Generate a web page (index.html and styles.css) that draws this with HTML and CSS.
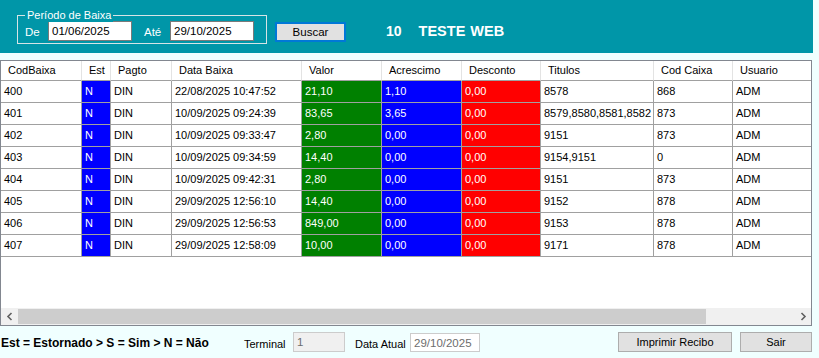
FILE: index.html
```html
<!DOCTYPE html>
<html lang="pt">
<head>
<meta charset="utf-8">
<title>Baixas</title>
<link rel="stylesheet" href="styles.css">
</head>
<body>
<div class="topbar">
  <div class="group">
    <span class="legend">Período de Baixa</span>
    <span class="lbl lbl-de">De</span>
    <div class="tb">01/06/2025</div>
    <span class="lbl lbl-ate">Até</span>
    <div class="tb">29/10/2025</div>
  </div>
  <button class="btn btn-buscar">Buscar</button>
  <span class="title-num">10</span>
  <span class="title-name">TESTE WEB</span>
</div>

<div class="grid-wrap">
  <div class="grid">
    <div class="hd">CodBaixa</div><div class="hd">Est</div><div class="hd">Pagto</div><div class="hd">Data Baixa</div><div class="hd">Valor</div><div class="hd">Acrescimo</div><div class="hd">Desconto</div><div class="hd">Titulos</div><div class="hd">Cod Caixa</div><div class="hd last">Usuario</div>

    <div class="c">400</div><div class="c blue">N</div><div class="c">DIN</div><div class="c">22/08/2025 10:47:52</div><div class="c green">21,10</div><div class="c blue">1,10</div><div class="c red">0,00</div><div class="c">8578</div><div class="c">868</div><div class="c last">ADM</div>
    <div class="c">401</div><div class="c blue">N</div><div class="c">DIN</div><div class="c">10/09/2025 09:24:39</div><div class="c green">83,65</div><div class="c blue">3,65</div><div class="c red">0,00</div><div class="c">8579,8580,8581,8582</div><div class="c">873</div><div class="c last">ADM</div>
    <div class="c">402</div><div class="c blue">N</div><div class="c">DIN</div><div class="c">10/09/2025 09:33:47</div><div class="c green">2,80</div><div class="c blue">0,00</div><div class="c red">0,00</div><div class="c">9151</div><div class="c">873</div><div class="c last">ADM</div>
    <div class="c">403</div><div class="c blue">N</div><div class="c">DIN</div><div class="c">10/09/2025 09:34:59</div><div class="c green">14,40</div><div class="c blue">0,00</div><div class="c red">0,00</div><div class="c">9154,9151</div><div class="c">0</div><div class="c last">ADM</div>
    <div class="c">404</div><div class="c blue">N</div><div class="c">DIN</div><div class="c">10/09/2025 09:42:31</div><div class="c green">2,80</div><div class="c blue">0,00</div><div class="c red">0,00</div><div class="c">9151</div><div class="c">873</div><div class="c last">ADM</div>
    <div class="c">405</div><div class="c blue">N</div><div class="c">DIN</div><div class="c">29/09/2025 12:56:10</div><div class="c green">14,40</div><div class="c blue">0,00</div><div class="c red">0,00</div><div class="c">9152</div><div class="c">878</div><div class="c last">ADM</div>
    <div class="c">406</div><div class="c blue">N</div><div class="c">DIN</div><div class="c">29/09/2025 12:56:53</div><div class="c green">849,00</div><div class="c blue">0,00</div><div class="c red">0,00</div><div class="c">9153</div><div class="c">878</div><div class="c last">ADM</div>
    <div class="c">407</div><div class="c blue">N</div><div class="c">DIN</div><div class="c">29/09/2025 12:58:09</div><div class="c green">10,00</div><div class="c blue">0,00</div><div class="c red">0,00</div><div class="c">9171</div><div class="c">878</div><div class="c last">ADM</div>
  </div>
  <div class="grid-empty"></div>
  <div class="hscroll">
    <div class="arrow"><svg width="8" height="9" viewBox="0 0 8 9"><path d="M5.5 1 L2 4.5 L5.5 8" fill="none" stroke="#606060" stroke-width="1.6"/></svg></div>
    <div class="thumb"></div>
    <div class="track"></div>
    <div class="arrow"><svg width="8" height="9" viewBox="0 0 8 9"><path d="M2.5 1 L6 4.5 L2.5 8" fill="none" stroke="#606060" stroke-width="1.6"/></svg></div>
  </div>
</div>

<div class="footer">
  <span class="note">Est = Estornado &gt; S = Sim &gt; N = Não</span>
  <span class="flbl flbl-term">Terminal</span>
  <div class="ftb ftb-term">1</div>
  <span class="flbl flbl-data">Data Atual</span>
  <div class="ftb ftb-data">29/10/2025</div>
  <span class="spacer"></span>
  <button class="btn btn-imp">Imprimir Recibo</button>
  <button class="btn btn-sair">Sair</button>
</div>
</body>
</html>
```

FILE: styles.css
```css
* { box-sizing: border-box; }
html, body {
  margin: 0;
  padding: 0;
  background: #f0ffff;
  font-family: "Liberation Sans", Arial, sans-serif;
  font-size: 11px;
  color: #000;
}

/* Top bar */
.topbar {
  width: 813px;
  height: 53px;
  background: #0096a8;
  display: flex;
  align-items: flex-start;
}
.group {
  position: relative;
  margin-left: 17px;
  margin-top: 15px;
  width: 250px;
  height: 29px;
  border: 1px solid #d6e4e6;
  display: flex;
  align-items: flex-start;
  padding-top: 5px;
  padding-left: 7px;
}
.legend {
  position: absolute;
  top: -8px;
  left: 7px;
  padding: 0 2px;
  background: #0096a8;
  color: #fff;
  font-size: 11px;
  line-height: 14px;
}
.lbl {
  color: #fff;
  font-size: 11.5px;
  line-height: 20px;
  padding-top: 1px;
}
.lbl-de { width: 23px; }
.lbl-ate { margin-left: 12px; width: 26px; }
.tb {
  width: 84px;
  height: 20px;
  background: #fff;
  border: 1px solid #7a7a7a;
  font-size: 11.5px;
  line-height: 18px;
  padding-left: 3px;
  color: #000;
}
.btn {
  font-family: "Liberation Sans", Arial, sans-serif;
  font-size: 11px;
  background: #e1e1e1;
  border: 1px solid #adadad;
  color: #000;
  padding: 0;
  height: 20px;
  line-height: 18px;
}
.btn-buscar {
  margin-left: 8px;
  margin-top: 22px;
  width: 71px;
  border: 2px solid #0078d7;
  line-height: 16px;
  font-size: 11.5px;
}
.title-num, .title-name {
  color: #fff;
  font-weight: bold;
  font-size: 14px;
  line-height: 18px;
  margin-top: 22px;
}
.title-num { margin-left: 40px; }
.title-name { margin-left: 17px; font-size: 14.5px; word-spacing: 1px; }

/* Grid */
.grid-wrap {
  margin-top: 7px;
  width: 812px;
  height: 266px;
  border: 1px solid #828790;
  background: #fff;
  display: flex;
  flex-direction: column;
}
.grid {
  display: grid;
  grid-template-columns: 81px 29px 61px 130px 80px 80px 79px 113px 79px 78px;
  grid-auto-rows: 22px;
  grid-template-rows: 20px;
}
.hd {
  border-right: 1px solid #e3e3e3;
  border-bottom: 1px solid #a0a0a0;
  padding-left: 7px;
  line-height: 19px;
  white-space: nowrap;
  overflow: hidden;
  color: #000;
}
.c {
  border-right: 1px solid #a0a0a0;
  border-bottom: 1px solid #a0a0a0;
  padding-left: 3px;
  line-height: 21px;
  white-space: nowrap;
  overflow: hidden;
}
.last { border-right: none; }
.blue { background: #0000ff; color: #fff; }
.green { background: #008000; color: #fff; }
.red { background: #ff0000; color: #fff; }
.grid-empty { flex: 1; }
.hscroll {
  height: 17px;
  display: flex;
  background: #f0f0f0;
}
.arrow {
  width: 17px;
  height: 17px;
  display: flex;
  align-items: center;
  justify-content: center;
}
.thumb {
  width: 688px;
  height: 15px;
  margin-top: 1px;
  background: #cdcdcd;
}
.track { flex: 1; }

/* Footer */
.footer {
  width: 812px;
  height: 32px;
  display: flex;
  align-items: flex-start;
  padding-top: 6px;
}
.note {
  font-weight: bold;
  font-size: 12px;
  line-height: 20px;
  padding-top: 1px;
  padding-left: 1px;
  width: 244px;
  white-space: nowrap;
}
.flbl {
  font-size: 11px;
  line-height: 20px;
  padding-top: 2px;
  white-space: nowrap;
}
.flbl-term { width: 49px; }
.flbl-data { margin-left: 10px; width: 55px; }
.ftb {
  height: 20px;
  border: 1px solid #cccccc;
  font-size: 11.5px;
  line-height: 18px;
  padding-left: 3px;
  color: #6d6d6d;
}
.ftb-term { width: 52px; background: #f0f0f0; }
.ftb-data { width: 70px; background: #fff; margin-top: 1px; height: 19px; }
.spacer { flex: 1; }
.btn-imp { width: 114px; }
.btn-sair { width: 72px; margin-left: 8px; }
```
